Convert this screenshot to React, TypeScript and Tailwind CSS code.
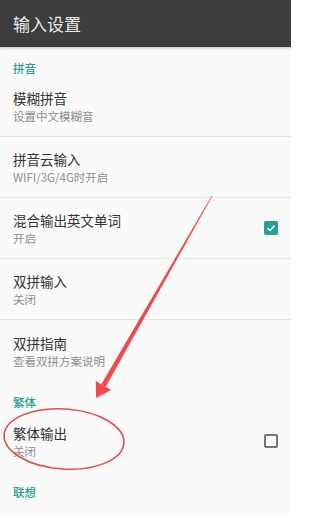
type Item = { title: string; summary: string; check?: boolean };
type Section = { label: string; items: Item[] };

const SECTIONS: Section[] = [
  {
    label: "拼音",
    items: [
      { title: "模糊拼音", summary: "设置中文模糊音" },
      { title: "拼音云输入", summary: "WIFI/3G/4G时开启" },
      { title: "混合输出英文单词", summary: "开启", check: true },
      { title: "双拼输入", summary: "关闭" },
      { title: "双拼指南", summary: "查看双拼方案说明" },
    ],
  },
  {
    label: "繁体",
    items: [{ title: "繁体输出", summary: "关闭", check: false }],
  },
  { label: "联想", items: [] },
];

function CheckBox({ on }: { on: boolean }) {
  if (on) {
    return (
      <span className="flex h-[14px] w-[14px] items-center justify-center rounded-[2px] bg-[#26a092]">
        <svg width="10" height="10" viewBox="0 0 10 10" fill="none">
          <path d="M1.6 5.2 L4 7.4 L8.5 2.6" stroke="#fff" strokeWidth="1.6" />
        </svg>
      </span>
    );
  }
  return <span className="h-[14px] w-[14px] rounded-[2px] border-2 border-[#747474]" />;
}

function Row({ item, last }: { item: Item; last: boolean }) {
  return (
    <div
      className={`flex h-[61px] items-center pl-[13px] pr-[13px] ${
        last ? "" : "border-b border-[#e6e6e6]"
      }`}
    >
      <div className="flex-1 min-w-0">
        <p className="text-[13.5px] leading-[20px] text-[#333333]">{item.title}</p>
        <p className="text-[11.5px] leading-[16px] text-[#8e8e8e]">{item.summary}</p>
      </div>
      {item.check !== undefined && <CheckBox on={item.check} />}
    </div>
  );
}

export default function App() {
  return (
    <div
      className="relative h-[516px] w-[291px] overflow-hidden bg-[#fafafa]"
      style={{ fontFamily: '"Noto Sans CJK SC", "Noto Sans", Roboto, sans-serif' }}
    >
      <header className="flex h-[47px] items-center bg-[#3d3d3d] pl-[13px] shadow-[0_1px_3px_rgba(0,0,0,0.25)]">
        <h1 className="text-[17px] leading-none text-[#ececec]">输入设置</h1>
      </header>

      {SECTIONS.map((sec) => (
        <section key={sec.label}>
          <div className="h-[29px] pl-[13px] pt-[13px] text-[11.5px] font-medium leading-[16px] text-[#2a9d8f]">
            {sec.label}
          </div>
          {sec.items.map((item, i) => (
            <Row key={item.title} item={item} last={i === sec.items.length - 1} />
          ))}
        </section>
      ))}

      {/* annotation: arrow + ellipse */}
      <svg className="pointer-events-none absolute inset-0" width="291" height="516" viewBox="0 0 291 516">
        <polygon
          points="212.3,196.2 211.7,195.8 101.3,384.2 105.7,386.8"
          fill="#f04a4c"
        />
        <polygon points="96,398 95.8,380.9 111.2,390.1" fill="#f04a4c" />
        <ellipse
          cx="64"
          cy="439"
          rx="60"
          ry="30"
          transform="rotate(4 64 439)"
          fill="none"
          stroke="#e84a4c"
          strokeWidth="1.6"
        />
      </svg>
    </div>
  );
}
